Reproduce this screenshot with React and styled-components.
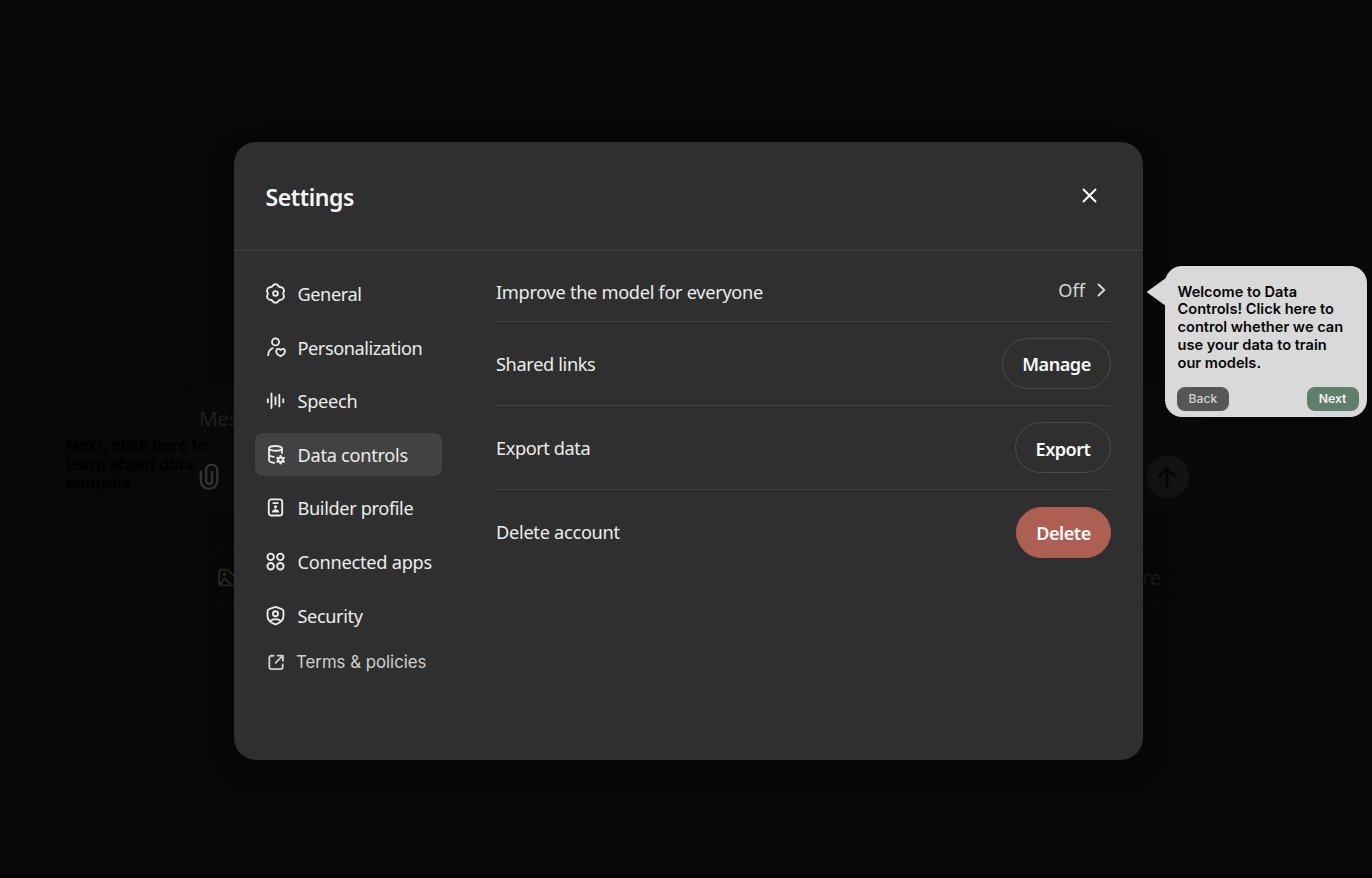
import React from "react";
import styled, { createGlobalStyle, css } from "styled-components";

const Global = createGlobalStyle`
  * { box-sizing: border-box; }
  body { margin: 0; background: #070707; overflow: hidden; }
  button { font: inherit; margin: 0; cursor: pointer; }
`;

const ui = css`font-family: "Noto Sans", "Open Sans", sans-serif;`;

const Page = styled.div`
  position: relative;
  width: 1372px;
  height: 878px;
  overflow: hidden;
  background: #070707;
  border-bottom: 4px solid #020202;
  ${ui}
`;

/* Dimmed chat screen behind the dialog */
const Backdrop = styled.div`
  display: flex;
  flex-direction: column;
  width: 1028px;
  margin-left: 174px;
  padding-top: 383px;
  gap: 37px;
`;
const Composer = styled.div`
  display: flex;
  flex-direction: column;
  justify-content: space-between;
  height: 129px;
  padding: 19px 13.5px 14px 25px;
  border-radius: 36px;
  background: #090909;
  color: #212121;
  font-size: 20.5px;
  line-height: 32px;
`;
const ComposerTools = styled.div`
  display: flex;
  justify-content: space-between;
  align-items: center;
`;
const Send = styled.div`
  display: grid;
  place-items: center;
  width: 43px;
  height: 43px;
  border-radius: 50%;
  background: #131313;
`;
const Chips = styled.div`
  display: flex;
  justify-content: space-between;
  padding: 0 25px 0 24px;
`;
const Chip = styled.div`
  display: flex;
  align-items: center;
  justify-content: ${(p) => (p.$end ? "flex-end" : "flex-start")};
  width: 120px;
  height: 57px;
  padding: 0 15px 0 18px;
  border: 1px solid #0d0d0d;
  border-radius: 29px;
  color: #1b1b1b;
  font-size: 19px;
  letter-spacing: 0.2px;
`;
const PastHint = styled.div`
  position: absolute;
  left: 66px;
  top: 435.5px;
  width: 160px;
  font: 700 16.1px/19.4px Inter, sans-serif;
  color: #000;
`;

const Dialog = styled.section`
  position: absolute;
  left: 233.5px;
  top: 142px;
  width: 909.5px;
  height: 618px;
  display: flex;
  flex-direction: column;
  border-radius: 22px;
  background: #2f2f2f;
  color: #ececec;
  box-shadow: 0 8px 24px rgba(0, 0, 0, 0.4);
`;
const Header = styled.header`
  display: flex;
  align-items: center;
  justify-content: space-between;
  height: 109px;
  padding: 3px 45px 0 32px;
  border-bottom: 2px solid #3a3a3a;
`;
const Title = styled.h2`
  margin: 0;
  font-size: 23px;
  line-height: 32px;
  font-weight: 600;
  letter-spacing: -0.4px;
  color: #f7f7f7;
`;
const Close = styled.button`
  display: grid;
  padding: 0;
  margin-top: -3px;
  border: 0;
  background: none;
  color: #fff;
`;
const Body = styled.div`
  display: flex;
  flex: 1;
`;
const Nav = styled.nav`
  display: flex;
  flex-direction: column;
  width: 262.5px;
  padding: 21px 0 0 21.5px;
  gap: 10.6px;
`;
const NavItem = styled.a`
  display: flex;
  align-items: center;
  gap: 11.5px;
  width: 187px;
  height: 43px;
  padding-left: 10px;
  border-radius: 8px;
  background: ${(p) => (p.$active ? "#424242" : "transparent")};
  font-size: 18.2px;
  letter-spacing: ${(p) => p.$ls || 0}px;
  white-space: nowrap;
  svg { flex: none; }
  span { margin-top: 1px; }
`;
const TermsLink = styled.a`
  display: flex;
  align-items: center;
  gap: 10px;
  margin-top: 3px;
  padding-left: 11px;
  height: 24px;
  font: 400 16.8px/24px Inter, sans-serif;
  color: #cfcfcf;
  white-space: nowrap;
`;
const Rows = styled.div`
  width: 615px;
`;
const Row = styled.div`
  display: flex;
  align-items: center;
  justify-content: space-between;
  height: ${(p) => p.$h || 84.2}px;
  padding-top: ${(p) => p.$pt || 0}px;
  border-bottom: ${(p) => (p.$last ? "0" : "1.5px solid #424242")};
  font-size: 18.2px;
`;
const Label = styled.span`
  letter-spacing: ${(p) => p.$ls}px;
`;
const Value = styled.div`
  display: flex;
  align-items: center;
  gap: 12px;
  padding-right: 5px;
  margin-top: -3px;
  color: #d6d6d6;
`;
const Pill = styled.button`
  width: ${(p) => p.$w}px;
  height: 51px;
  margin-top: -0.5px;
  padding: 2px 0 0;
  border: 1.5px solid ${(p) => (p.$danger ? "#ae5f54" : "#4b4b4b")};
  border-radius: 26px;
  background: ${(p) => (p.$danger ? "#ae5f54" : "transparent")};
  color: #fafafa;
  font-weight: 600;
  font-size: 18.1px;
  letter-spacing: -0.5px;
`;

const Coach = styled.aside`
  position: absolute;
  left: 1164.5px;
  top: 266px;
  width: 202px;
  height: 150.5px;
  display: flex;
  flex-direction: column;
  justify-content: space-between;
  padding: 17.6px 8px 6px 12.5px;
  border-radius: 17px;
  background: #d9d9d9;
  font-family: Inter, sans-serif;
  color: #060606;
`;
const Tail = styled.svg`
  position: absolute;
  left: -19px;
  top: 10px;
`;
const CoachText = styled.p`
  margin: 0;
  width: 170px;
  padding-left: 0.5px;
  font-size: 14.6px;
  line-height: 17.8px;
  font-weight: 600;
`;
const CoachActions = styled.div`
  display: flex;
  justify-content: space-between;
`;
const CoachButton = styled.button`
  width: 52px;
  height: 24px;
  padding: 0;
  border: 0;
  border-radius: 8px;
  background: ${(p) => (p.$primary ? "#5f7e6b" : "#565656")};
  color: ${(p) => (p.$primary ? "#f2f2f2" : "#d2d2d2")};
  font-size: 12.2px;
  font-weight: ${(p) => (p.$primary ? 600 : 500)};
`;

const Icon = ({ size = 21, sw = 2.1, children, ...rest }) => (
  <svg width={size} height={size} viewBox="0 0 24 24" fill="none" stroke="currentColor"
    strokeWidth={sw} strokeLinecap="round" strokeLinejoin="round" {...rest}>{children}</svg>
);

/* Smooth closed outline with `lobes` rounded teeth */
function cogPath(cx, cy, lobes, tip, valley, spread) {
  const pts = [];
  const step = 360 / lobes;
  for (let i = 0; i < lobes; i++) {
    const a = i * step - 90;
    [[a - spread, tip], [a + spread, tip], [a + step / 2, valley]].forEach(([deg, r]) => {
      const t = (deg * Math.PI) / 180;
      pts.push([cx + r * Math.cos(t), cy + r * Math.sin(t)]);
    });
  }
  const mid = (p, q) => `${((p[0] + q[0]) / 2).toFixed(2)} ${((p[1] + q[1]) / 2).toFixed(2)}`;
  const n = pts.length;
  let d = `M${mid(pts[n - 1], pts[0])}`;
  pts.forEach((p, i) => {
    d += `Q${p[0].toFixed(2)} ${p[1].toFixed(2)} ${mid(p, pts[(i + 1) % n])}`;
  });
  return `${d}z`;
}

const GearIcon = () => (
  <Icon>
    <path d={cogPath(12, 12, 6, 10.8, 8.2, 12)} />
    <circle cx="12" cy="12" r="2.7" />
  </Icon>
);
const PersonHeartIcon = () => (
  <Icon>
    <circle cx="12" cy="5.6" r="4" />
    <path d="M3.600 20.800c.2-4 2.200-6.800 5.200-8" />
    <path d="M17.800 21.800c-2.500-1.100-5-3-5-5.600 0-2.700 3.300-3.600 5-1.300 1.700-2.300 5-1.400 5 1.300 0 2.600-2.500 4.500-5 5.600z" />
  </Icon>
);
const WaveIcon = () => (
  <Icon sw={2.1}>
    <path d="M3.200 10.500v3.500M7.400 3.800v16.800M12 8.300v8.200M16.400 5.400v13.400M20.900 10.500v3.500" />
  </Icon>
);
const DatabaseGearIcon = () => (
  <Icon>
    <ellipse cx="12" cy="5" rx="7.400" ry="2.700" />
    <path d="M4.600 5v13.400c0 1.700 2.700 2.900 6 3.100M19.400 5v5.200M4.600 11.800c0 1.500 2.400 2.700 5.500 2.900" />
    <path fill="currentColor" fillRule="evenodd" stroke="none" d={`${cogPath(17.8, 18, 6, 5.7, 3, 14)}M19.300 18a1.500 1.500 0 1 0-3 0 1.500 1.500 0 0 0 3 0z`} />
  </Icon>
);
const BadgeIcon = () => (
  <Icon>
    <rect x="4.300" y="2.700" width="15.400" height="18.400" rx="2.800" />
    <path strokeWidth="1.800" d="M9.300 7h5.400" />
    <circle cx="12" cy="11.300" r="1.800" fill="currentColor" stroke="none" />
    <path fill="currentColor" stroke="none" d="M7.800 17.800c.3-2.500 2-3.700 4.200-3.700s3.900 1.200 4.200 3.700z" />
  </Icon>
);
const AppsIcon = () => (
  <Icon sw={2.200}>
    <circle cx="6.500" cy="6.700" r="3.700" /><circle cx="17.500" cy="6.700" r="3.700" />
    <circle cx="6.500" cy="17.500" r="3.700" /><circle cx="17.500" cy="17.500" r="3.700" />
  </Icon>
);
const ShieldIcon = () => (
  <Icon>
    <path d="M11 2.400q1-.5 2 0l6.200 2.300q1.900.7 1.900 2.600v5.200c0 4.700-3.500 7.600-8.100 9.400q-1 .4-2 0c-4.600-1.800-8.100-4.700-8.100-9.400V7.300q0-1.900 1.900-2.600z" />
    <circle cx="12" cy="10" r="2.900" />
    <path d="M6.200 18.300c1.300-1.500 3.400-2.200 5.800-2.200s4.500.7 5.800 2.200" />
  </Icon>
);
const ExternalIcon = () => (
  <Icon size={20} sw={2.200}>
    <path d="M9 4.500H6.500a2.500 2.500 0 0 0-2.500 2.500v11a2.500 2.500 0 0 0 2.500 2.500h11a2.500 2.500 0 0 0 2.500-2.500v-3M14 4.300h6.300v6.300M20 4.600l-8.500 8.500" />
  </Icon>
);

const items = [
  ["General", GearIcon, -0.44],
  ["Personalization", PersonHeartIcon, -0.45],
  ["Speech", WaveIcon, -0.3],
  ["Data controls", DatabaseGearIcon, -0.28],
  ["Builder profile", BadgeIcon, -0.37],
  ["Connected apps", AppsIcon, -0.25],
  ["Security", ShieldIcon, -0.4],
];

export default function App() {
  return (
    <Page>
      <Global />
      <Backdrop>
        <Composer>
          <div>Message</div>
          <ComposerTools>
            <svg width="20" height="28" viewBox="0 0 20 28" fill="none" stroke="#333" strokeWidth="2.400" strokeLinecap="round">
              <path d="M1.900 9v8.700a8.200 8.200 0 0 0 16.400 0V7.200a5.600 5.600 0 0 0-11.200 0v10.800a3 3 0 0 0 6 0V9" />
            </svg>
            <Send>
              <svg width="20" height="22" viewBox="0 0 20 22" fill="none" stroke="#060606" strokeWidth="2.700" strokeLinecap="round" strokeLinejoin="round">
                <path d="M10 20V2.500M2.500 10L10 2.500l7.500 7.500" />
              </svg>
            </Send>
          </ComposerTools>
        </Composer>
        <Chips>
          <Chip>
            <Icon size={21} color="#232d18" sw={2.200}>
              <path d="M12 3H5a2.500 2.500 0 0 0-2.500 2.500v13A2.500 2.500 0 0 0 5 21h14M12 3l9 9M4 19l5-6 7 7" />
              <circle cx="8.500" cy="8.500" r="1" />
            </Icon>
          </Chip>
          <Chip $end>More</Chip>
        </Chips>
      </Backdrop>
      <PastHint>Next, click here to learn about data controls</PastHint>

      <Dialog>
        <Header>
          <Title>Settings</Title>
          <Close aria-label="Close">
            <svg width="17" height="17" viewBox="0 0 17 17" stroke="currentColor" strokeWidth="2" strokeLinecap="round">
              <path d="M2.500 2.500l12 12M14.500 2.500l-12 12" />
            </svg>
          </Close>
        </Header>
        <Body>
          <Nav>
            {items.map(([label, Glyph, ls]) => (
              <NavItem key={label} $active={label === "Data controls"} $ls={ls}>
                <Glyph />
                <span>{label}</span>
              </NavItem>
            ))}
            <TermsLink>
              <ExternalIcon />
              Terms &amp; policies
            </TermsLink>
          </Nav>
          <Rows>
            <Row $h={71} $pt={11}>
              <Label $ls={-0.31}>Improve the model for everyone</Label>
              <Value>
                Off
                <svg width="9" height="14" viewBox="0 0 9 14" fill="none" stroke="currentColor" strokeWidth="2" strokeLinecap="round" strokeLinejoin="round">
                  <path d="M1.500 1.500L7.300 7l-5.800 5.500" />
                </svg>
              </Value>
            </Row>
            <Row>
              <Label $ls={-0.36}>Shared links</Label>
              <Pill $w={109}>Manage</Pill>
            </Row>
            <Row>
              <Label $ls={-0.42}>Export data</Label>
              <Pill $w={96}>Export</Pill>
            </Row>
            <Row $last>
              <Label $ls={-0.28}>Delete account</Label>
              <Pill $w={95} $danger>Delete</Pill>
            </Row>
          </Rows>
        </Body>
      </Dialog>

      <Coach>
        <Tail width="20" height="32" viewBox="0 0 20 32" fill="#d9d9d9">
          <path d="M20 2L1.500 15.200q-1 .8 0 1.600L20 30z" />
        </Tail>
        <CoachText>Welcome to Data Controls! Click here to control whether we can use your data to train our models.</CoachText>
        <CoachActions>
          <CoachButton>Back</CoachButton>
          <CoachButton $primary>Next</CoachButton>
        </CoachActions>
      </Coach>
    </Page>
  );
}
